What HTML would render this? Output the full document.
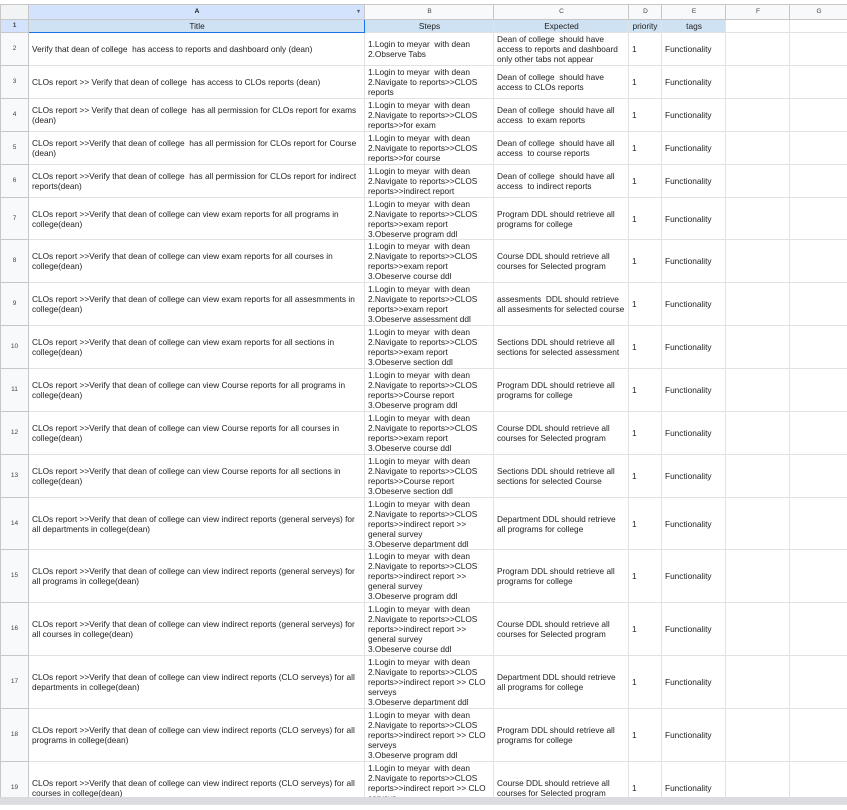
<!DOCTYPE html>
<html><head><style>
*{margin:0;padding:0;box-sizing:border-box}
body{width:847px;height:810px;overflow:hidden;background:#fff;font-family:"Liberation Sans",Arial,sans-serif;font-size:8.3px;color:#222;position:relative}
#wrap{position:absolute;left:0;top:4px;width:847px;height:793px;overflow:hidden}
table{border-collapse:collapse;table-layout:fixed;width:847px}
td{border:1px solid #e2e2e2;padding:0 2px 0 3px;line-height:10px;vertical-align:middle;overflow:hidden;white-space:normal}
td.n{background:#f8f9fa;color:#444;text-align:center;font-size:6.5px;border-color:#c7c7c7;padding:0}
tr.h td{background:#f8f9fa;color:#444;text-align:center;font-size:6.5px;height:15px;border-color:#c7c7c7}
tr.h td.sel{background:#d3e3fd;color:#111;font-weight:bold}
tr.t td{background:#cfe2f3;text-align:center;height:13px}
tr.t td.s{border:1px solid #1a73e8}
tr.t td.x{background:#fff}
#sb{position:absolute;left:0;top:797px;width:847px;height:7px;background:#dadce0}
#bt{position:absolute;left:0;top:804px;width:847px;height:6px;background:#fff;border-top:1px solid #e0e0e0}
</style></head><body>
<div style="position:absolute;top:0;left:0;width:847px;height:4px;background:#fff"></div>
<div id="wrap"><table>
<colgroup><col style="width:28px"><col style="width:336px"><col style="width:129px"><col style="width:135px"><col style="width:33px"><col style="width:64px"><col style="width:64px"><col style="width:58px"></colgroup>
<tr class="h"><td style="background:#f1f3f4"></td><td class="sel" style="position:relative">A<span style="position:absolute;right:4px;top:2px;font-size:6px;color:#666">▾</span></td><td>B</td><td>C</td><td>D</td><td>E</td><td>F</td><td>G</td></tr>
<tr class="t"><td class="n" style="background:#d3e3fd;font-weight:bold">1</td><td class="s">Title</td><td>Steps</td><td>Expected</td><td style="padding:0">priority</td><td>tags</td><td class="x"></td><td class="x"></td></tr>
<tr style="height:33px"><td class="n">2</td><td>Verify that dean of college&nbsp; has access to reports and dashboard only (dean)</td><td>1.Login to meyar&nbsp; with dean<br>2.Observe Tabs</td><td>Dean of college&nbsp; should have access to reports and dashboard only other tabs not appear</td><td>1</td><td>Functionality</td><td></td><td></td></tr>
<tr style="height:33px"><td class="n">3</td><td>CLOs report &gt;&gt; Verify that dean of college&nbsp; has access to CLOs reports (dean)</td><td>1.Login to meyar&nbsp; with dean<br>2.Navigate to reports&gt;&gt;CLOS reports</td><td>Dean of college&nbsp; should have access to CLOs reports</td><td>1</td><td>Functionality</td><td></td><td></td></tr>
<tr style="height:33px"><td class="n">4</td><td>CLOs report &gt;&gt; Verify that dean of college&nbsp; has all permission for CLOs report for exams (dean)</td><td>1.Login to meyar&nbsp; with dean<br>2.Navigate to reports&gt;&gt;CLOS reports&gt;&gt;for exam</td><td>Dean of college&nbsp; should have all access&nbsp; to exam reports</td><td>1</td><td>Functionality</td><td></td><td></td></tr>
<tr style="height:33px"><td class="n">5</td><td>CLOs report &gt;&gt;Verify that dean of college&nbsp; has all permission for CLOs report for Course (dean)</td><td>1.Login to meyar&nbsp; with dean<br>2.Navigate to reports&gt;&gt;CLOS reports&gt;&gt;for course</td><td>Dean of college&nbsp; should have all access&nbsp; to course reports</td><td>1</td><td>Functionality</td><td></td><td></td></tr>
<tr style="height:33px"><td class="n">6</td><td>CLOs report &gt;&gt;Verify that dean of college&nbsp; has all permission for CLOs report for indirect reports(dean)</td><td>1.Login to meyar&nbsp; with dean<br>2.Navigate to reports&gt;&gt;CLOS reports&gt;&gt;indirect report</td><td>Dean of college&nbsp; should have all access&nbsp; to indirect reports</td><td>1</td><td>Functionality</td><td></td><td></td></tr>
<tr style="height:42px"><td class="n">7</td><td>CLOs report &gt;&gt;Verify that dean of college can view exam reports for all programs in college(dean)</td><td>1.Login to meyar&nbsp; with dean<br>2.Navigate to reports&gt;&gt;CLOS reports&gt;&gt;exam report<br>3.Obeserve program ddl</td><td>Program DDL should retrieve all programs for college</td><td>1</td><td>Functionality</td><td></td><td></td></tr>
<tr style="height:43px"><td class="n">8</td><td>CLOs report &gt;&gt;Verify that dean of college can view exam reports for all courses in college(dean)</td><td>1.Login to meyar&nbsp; with dean<br>2.Navigate to reports&gt;&gt;CLOS reports&gt;&gt;exam report<br>3.Obeserve course ddl</td><td>Course DDL should retrieve all courses for Selected program</td><td>1</td><td>Functionality</td><td></td><td></td></tr>
<tr style="height:43px"><td class="n">9</td><td>CLOs report &gt;&gt;Verify that dean of college can view exam reports for all assesmments in college(dean)</td><td>1.Login to meyar&nbsp; with dean<br>2.Navigate to reports&gt;&gt;CLOS reports&gt;&gt;exam report<br>3.Obeserve assessment ddl</td><td>assesments&nbsp; DDL should retrieve all assesments for selected course</td><td>1</td><td>Functionality</td><td></td><td></td></tr>
<tr style="height:43px"><td class="n">10</td><td>CLOs report &gt;&gt;Verify that dean of college can view exam reports for all sections in college(dean)</td><td>1.Login to meyar&nbsp; with dean<br>2.Navigate to reports&gt;&gt;CLOS reports&gt;&gt;exam report<br>3.Obeserve section ddl</td><td>Sections DDL should retrieve all sections for selected assessment</td><td>1</td><td>Functionality</td><td></td><td></td></tr>
<tr style="height:43px"><td class="n">11</td><td>CLOs report &gt;&gt;Verify that dean of college can view Course reports for all programs in college(dean)</td><td>1.Login to meyar&nbsp; with dean<br>2.Navigate to reports&gt;&gt;CLOS reports&gt;&gt;Course report<br>3.Obeserve program ddl</td><td>Program DDL should retrieve all programs for college</td><td>1</td><td>Functionality</td><td></td><td></td></tr>
<tr style="height:43px"><td class="n">12</td><td>CLOs report &gt;&gt;Verify that dean of college can view Course reports for all courses in college(dean)</td><td>1.Login to meyar&nbsp; with dean<br>2.Navigate to reports&gt;&gt;CLOS reports&gt;&gt;exam report<br>3.Obeserve course ddl</td><td>Course DDL should retrieve all courses for Selected program</td><td>1</td><td>Functionality</td><td></td><td></td></tr>
<tr style="height:43px"><td class="n">13</td><td>CLOs report &gt;&gt;Verify that dean of college can view Course reports for all sections in college(dean)</td><td>1.Login to meyar&nbsp; with dean<br>2.Navigate to reports&gt;&gt;CLOS reports&gt;&gt;Course report<br>3.Obeserve section ddl</td><td>Sections DDL should retrieve all sections for selected Course</td><td>1</td><td>Functionality</td><td></td><td></td></tr>
<tr style="height:52px"><td class="n">14</td><td>CLOs report &gt;&gt;Verify that dean of college can view indirect reports (general serveys) for all departments in college(dean)</td><td>1.Login to meyar&nbsp; with dean<br>2.Navigate to reports&gt;&gt;CLOS reports&gt;&gt;indirect report &gt;&gt;<br>general survey<br>3.Obeserve department ddl</td><td>Department DDL should retrieve all programs for college</td><td>1</td><td>Functionality</td><td></td><td></td></tr>
<tr style="height:53px"><td class="n">15</td><td>CLOs report &gt;&gt;Verify that dean of college can view indirect reports (general serveys) for all programs in college(dean)</td><td>1.Login to meyar&nbsp; with dean<br>2.Navigate to reports&gt;&gt;CLOS reports&gt;&gt;indirect report &gt;&gt;<br>general survey<br>3.Obeserve program ddl</td><td>Program DDL should retrieve all programs for college</td><td>1</td><td>Functionality</td><td></td><td></td></tr>
<tr style="height:53px"><td class="n">16</td><td>CLOs report &gt;&gt;Verify that dean of college can view indirect reports (general serveys) for all courses in college(dean)</td><td>1.Login to meyar&nbsp; with dean<br>2.Navigate to reports&gt;&gt;CLOS reports&gt;&gt;indirect report &gt;&gt;<br>general survey<br>3.Obeserve course ddl</td><td>Course DDL should retrieve all courses for Selected program</td><td>1</td><td>Functionality</td><td></td><td></td></tr>
<tr style="height:53px"><td class="n">17</td><td>CLOs report &gt;&gt;Verify that dean of college can view indirect reports (CLO serveys) for all departments in college(dean)</td><td>1.Login to meyar&nbsp; with dean<br>2.Navigate to reports&gt;&gt;CLOS reports&gt;&gt;indirect report &gt;&gt; CLO<br>serveys<br>3.Obeserve department ddl</td><td>Department DDL should retrieve all programs for college</td><td>1</td><td>Functionality</td><td></td><td></td></tr>
<tr style="height:53px"><td class="n">18</td><td>CLOs report &gt;&gt;Verify that dean of college can view indirect reports (CLO serveys) for all programs in college(dean)</td><td>1.Login to meyar&nbsp; with dean<br>2.Navigate to reports&gt;&gt;CLOS reports&gt;&gt;indirect report &gt;&gt; CLO<br>serveys<br>3.Obeserve program ddl</td><td>Program DDL should retrieve all programs for college</td><td>1</td><td>Functionality</td><td></td><td></td></tr>
<tr style="height:53px"><td class="n">19</td><td>CLOs report &gt;&gt;Verify that dean of college can view indirect reports (CLO serveys) for all courses in college(dean)</td><td>1.Login to meyar&nbsp; with dean<br>2.Navigate to reports&gt;&gt;CLOS reports&gt;&gt;indirect report &gt;&gt; CLO<br>serveys<br>3.Obeserve course ddl</td><td>Course DDL should retrieve all courses for Selected program</td><td>1</td><td>Functionality</td><td></td><td></td></tr>
</table></div>
<div id="sb"></div><div id="bt"></div>
</body></html>
